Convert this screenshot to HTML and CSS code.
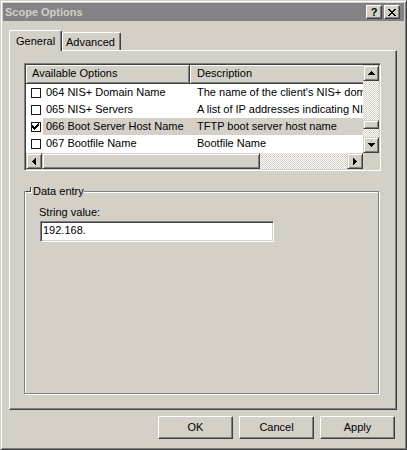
FILE: index.html
```html
<!DOCTYPE html>
<html>
<head>
<meta charset="utf-8">
<title>Scope Options</title>
<link rel="stylesheet" href="styles.css">
</head>
<body>
<div class="window">
  <div class="titlebar">
    <span class="title">Scope Options</span>
    <div class="caption-btns">
      <span class="cbtn help">?</span>
      <span class="cbtn close">
        <svg width="8" height="7" viewBox="0 0 8 7" shape-rendering="crispEdges">
          <rect x="0" y="0" width="2" height="1"/><rect x="6" y="0" width="2" height="1"/>
          <rect x="1" y="1" width="2" height="1"/><rect x="5" y="1" width="2" height="1"/>
          <rect x="2" y="2" width="4" height="1"/>
          <rect x="3" y="3" width="2" height="1"/>
          <rect x="2" y="4" width="4" height="1"/>
          <rect x="1" y="5" width="2" height="1"/><rect x="5" y="5" width="2" height="1"/>
          <rect x="0" y="6" width="2" height="1"/><rect x="6" y="6" width="2" height="1"/>
        </svg>
      </span>
    </div>
  </div>
  <div class="main">
    <div class="tabs">
      <div class="tab active">General</div>
      <div class="tab">Advanced</div>
    </div>
    <div class="panel">
      <div class="listview">
        <div class="lv-content">
          <div class="lv-header">
            <div class="hcell c1">Available Options</div>
            <div class="hcell c2">Description</div>
          </div>
          <div class="row">
            <span class="chkcell"><span class="chk"></span></span>
            <span class="name">064 NIS+ Domain Name</span>
            <span class="desc">The name of the client's NIS+ domain</span>
          </div>
          <div class="row">
            <span class="chkcell"><span class="chk"></span></span>
            <span class="name">065 NIS+ Servers</span>
            <span class="desc">A list of IP addresses indicating NIS+ servers</span>
          </div>
          <div class="row selected">
            <span class="chkcell"><span class="chk">
              <svg width="8" height="8" viewBox="0 0 8 8" shape-rendering="crispEdges">
                <rect x="6" y="0" width="1" height="1"/>
                <rect x="5" y="1" width="2" height="1"/>
                <rect x="0" y="2" width="1" height="1"/><rect x="4" y="2" width="3" height="1"/>
                <rect x="0" y="3" width="2" height="1"/><rect x="3" y="3" width="3" height="1"/>
                <rect x="0" y="4" width="5" height="1"/>
                <rect x="1" y="5" width="3" height="1"/>
                <rect x="2" y="6" width="1" height="1"/>
              </svg>
            </span></span>
            <span class="name">066 Boot Server Host Name</span>
            <span class="desc">TFTP boot server host name</span>
          </div>
          <div class="row">
            <span class="chkcell"><span class="chk"></span></span>
            <span class="name">067 Bootfile Name</span>
            <span class="desc">Bootfile Name</span>
          </div>
        </div>
        <div class="vscroll">
          <div class="sbtn">
            <svg width="7" height="4" viewBox="0 0 7 4" shape-rendering="crispEdges"><rect x="3" y="0" width="1" height="1"/><rect x="2" y="1" width="3" height="1"/><rect x="1" y="2" width="5" height="1"/><rect x="0" y="3" width="7" height="1"/></svg>
          </div>
          <div class="track vtrack"><div class="thumb vthumb"></div></div>
          <div class="sbtn">
            <svg width="7" height="4" viewBox="0 0 7 4" shape-rendering="crispEdges"><rect x="0" y="0" width="7" height="1"/><rect x="1" y="1" width="5" height="1"/><rect x="2" y="2" width="3" height="1"/><rect x="3" y="3" width="1" height="1"/></svg>
          </div>
        </div>
        <div class="hscroll">
          <div class="sbtn">
            <svg width="4" height="7" viewBox="0 0 4 7" shape-rendering="crispEdges"><rect x="3" y="0" width="1" height="7"/><rect x="2" y="1" width="1" height="5"/><rect x="1" y="2" width="1" height="3"/><rect x="0" y="3" width="1" height="1"/></svg>
          </div>
          <div class="track htrack"><div class="thumb hthumb"></div></div>
          <div class="sbtn">
            <svg width="4" height="7" viewBox="0 0 4 7" shape-rendering="crispEdges"><rect x="0" y="0" width="1" height="7"/><rect x="1" y="1" width="1" height="5"/><rect x="2" y="2" width="1" height="3"/><rect x="3" y="3" width="1" height="1"/></svg>
          </div>
        </div>
        <div class="corner"></div>
      </div>
      <fieldset class="group">
        <legend class="group-title"><span class="legend-mark"></span>Data entry</legend>
        <div class="group-body">
          <div class="field-label">String value:</div>
          <div class="textbox">192.168.</div>
        </div>
      </fieldset>
    </div>
    <div class="buttons">
      <div class="btn">OK</div>
      <div class="btn">Cancel</div>
      <div class="btn">Apply</div>
    </div>
  </div>
</div>
</body>
</html>
```

FILE: styles.css
```css
* {
  box-sizing: border-box;
}

html, body {
  margin: 0;
  padding: 0;
}

body {
  width: 407px;
  height: 450px;
  overflow: hidden;
  background: #d4d0c8;
  font-family: "Liberation Sans", Arial, sans-serif;
  font-size: 11px;
  color: #000;
}

.window {
  width: 407px;
  height: 450px;
  background: #d4d0c8;
  border: 1px solid;
  border-color: #d4d0c8 #404040 #404040 #d4d0c8;
  box-shadow: inset 1px 1px 0 #fff, inset -1px -1px 0 #808080;
  padding: 2px;
  display: flex;
  flex-direction: column;
}

/* Title bar */
.titlebar {
  height: 18px;
  flex: none;
  background: #848284;
  display: flex;
  align-items: center;
  padding-left: 2px;
}

.title {
  color: #d4d0c8;
  font-weight: bold;
  font-size: 11px;
  line-height: 13px;
}

.caption-btns {
  margin-left: auto;
  margin-right: 4px;
  display: flex;
  gap: 2px;
}

.cbtn {
  width: 16px;
  height: 14px;
  background: #d4d0c8;
  border: 1px solid;
  border-color: #fff #404040 #404040 #fff;
  box-shadow: inset -1px -1px 0 #808080;
  display: flex;
  align-items: center;
  justify-content: center;
}

.cbtn.help {
  font-weight: bold;
  font-size: 11px;
  line-height: 11px;
  padding-top: 1px;
}

.cbtn svg {
  display: block;
  fill: #000;
  margin-top: 1px;
}

/* Main area */
.main {
  flex: 1;
  display: flex;
  flex-direction: column;
  padding: 9px 7px 0 6px;
}

.tabs {
  display: flex;
  align-items: flex-end;
  height: 20px;
  flex: none;
}

.tab {
  height: 18px;
  padding: 2px 0 0 3px;
  width: 59px;
  line-height: 14px;
  border-top: 1px solid #fff;
  border-left: 1px solid #fff;
  border-right: 1px solid #404040;
  box-shadow: inset -1px 0 0 #808080;
  border-radius: 2px 2px 0 0;
  background: #d4d0c8;
}

.tab.active {
  position: relative;
  z-index: 1;
  width: 53px;
  height: 21px;
  margin-bottom: -1px;
  padding: 3px 0 0 6px;
}

.panel {
  height: 360px;
  flex: none;
  border: 1px solid;
  border-color: #fff #404040 #404040 #fff;
  box-shadow: inset -1px -1px 0 #808080;
  padding: 12px 15px 15px 14px;
  display: flex;
  flex-direction: column;
}

/* List view */
.listview {
  width: 357px;
  height: 108px;
  flex: none;
  background: #fff;
  border: 1px solid;
  border-color: #808080 #fff #fff #808080;
  box-shadow: inset 1px 1px 0 #404040, inset -1px -1px 0 #d4d0c8;
  padding: 1px;
  display: grid;
  grid-template-columns: 337px 16px;
  grid-template-rows: 88px 16px;
}

.lv-content {
  overflow: hidden;
  white-space: nowrap;
}

.lv-header {
  display: flex;
  height: 19px;
}

.hcell {
  flex: none;
  height: 19px;
  line-height: 16px;
  background: #d4d0c8;
  border-right: 1px solid #404040;
  border-bottom: 1px solid #404040;
  box-shadow: inset 1px 1px 0 #fff, inset -1px -1px 0 #808080;
}

.hcell.c1 {
  width: 164px;
  padding-left: 6px;
}

.hcell.c2 {
  width: 300px;
  padding-left: 7px;
}

.row {
  display: flex;
  height: 17px;
  align-items: stretch;
  line-height: 17px;
}

.chkcell {
  flex: none;
  width: 17px;
  padding-left: 5px;
  display: flex;
  align-items: center;
}

.chk {
  width: 10px;
  height: 10px;
  border: 1px solid #1a1a1a;
  background: #fff;
  display: flex;
  align-items: center;
  justify-content: center;
}

.chk svg {
  display: block;
  fill: #000;
}

.name {
  flex: none;
  width: 147px;
  padding-left: 3px;
}

.desc {
  flex: none;
  width: 300px;
  padding-left: 7px;
}

.row.selected .name,
.row.selected .desc {
  background: #d4d0c8;
}

/* Scrollbars */
.vscroll {
  display: flex;
  flex-direction: column;
}

.hscroll {
  display: flex;
}

.sbtn,
.thumb {
  background: #d4d0c8;
  border: 1px solid;
  border-color: #d4d0c8 #404040 #404040 #d4d0c8;
  box-shadow: inset 1px 1px 0 #fff, inset -1px -1px 0 #808080;
}

.sbtn {
  width: 16px;
  height: 16px;
  flex: none;
  display: flex;
  align-items: center;
  justify-content: center;
}

.sbtn svg {
  display: block;
  fill: #000;
}

.track {
  flex: 1;
  background: repeating-conic-gradient(#d4d0c8 0% 25%, #fff 0% 50%) 0 0 / 2px 2px;
}

.vthumb {
  height: 9px;
  margin-top: 39px;
}

.htrack {
  display: flex;
}

.hthumb {
  width: 218px;
  height: 16px;
}

.corner {
  background: #d4d0c8;
}

/* Group box */
.group {
  margin: 13px 0 0 0;
  padding: 0;
  width: 355px;
  flex: 1;
  min-width: 0;
  border: 1px solid #808080;
  box-shadow: 1px 1px 0 #fff, inset 1px 1px 0 #fff;
}

.group-title {
  padding: 0;
  margin-left: 1px;
  line-height: 14px;
  background: #d4d0c8;
  display: flex;
  align-items: center;
}

.legend-mark {
  display: inline-block;
  width: 5px;
  height: 5px;
  margin: -3px 2px 0 0;
  border-right: 1px solid #404040;
  border-bottom: 1px solid #404040;
  box-shadow: 1px 1px 0 #fff;
}

.group-body {
  padding: 8px 0 0 14px;
}

.field-label {
  line-height: 13px;
}

.textbox {
  margin: 2px 0 0 1px;
  width: 234px;
  height: 21px;
  line-height: 17px;
  padding-left: 2px;
  background: #fff;
  border: 1px solid;
  border-color: #808080 #fff #fff #808080;
  box-shadow: inset 1px 1px 0 #404040, inset -1px -1px 0 #d4d0c8;
}

/* Dialog buttons */
.buttons {
  display: flex;
  justify-content: flex-end;
  gap: 6px;
  margin-top: 6px;
  padding-right: 2px;
}

.btn {
  width: 75px;
  height: 23px;
  line-height: 21px;
  text-align: center;
  background: #d4d0c8;
  border: 1px solid;
  border-color: #fff #404040 #404040 #fff;
  box-shadow: inset -1px -1px 0 #808080;
}
```
